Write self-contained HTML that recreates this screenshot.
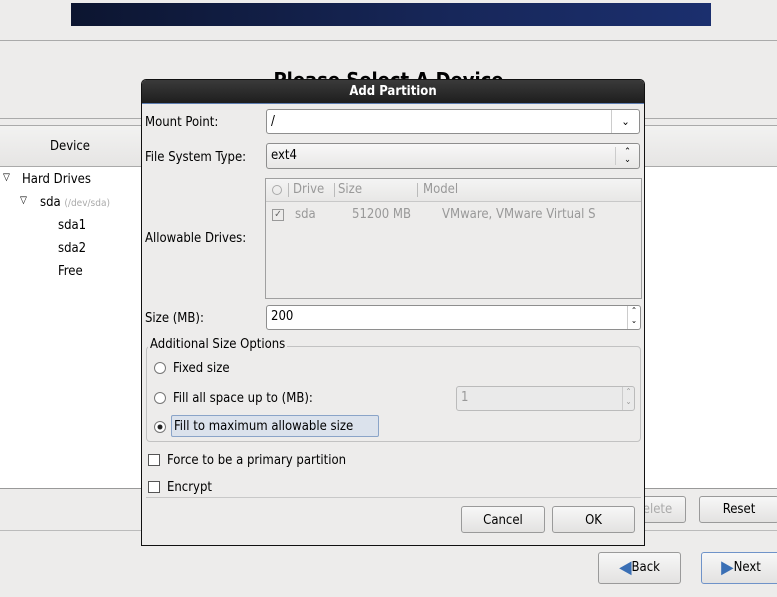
<!DOCTYPE html>
<html><head><style>
*{box-sizing:border-box;margin:0;padding:0}
body{width:777px;height:597px;background:#edeceb;font-family:"DejaVu Sans Condensed","DejaVu Sans","Liberation Sans",sans-serif;font-size:13px;color:#000;position:relative;overflow:hidden}
.a{position:absolute}
.btn{position:absolute;border:1px solid #9a9a9a;border-radius:3px;background:linear-gradient(#f7f7f7,#e3e2e1);text-align:center;line-height:26px}
.ent{position:absolute;background:#fff;border:1px solid #8e8e8e;border-radius:3px;padding-left:4px;line-height:22px}
.radio{position:absolute;width:12px;height:12px;border:1px solid #777;border-radius:50%;background:#fff}
.chk{position:absolute;width:12px;height:12px;border:1px solid #555;background:#fff}
</style></head><body>
<div class="a" style="left:71px;top:3px;width:640px;height:23px;background:linear-gradient(90deg,#0c1530,#17275a 60%,#1b2f6e)"></div>
<div class="a" style="left:0;top:40px;width:777px;height:1px;background:#aaa"></div>
<div class="a" style="left:0;top:68px;width:777px;text-align:center;font-size:20px;font-weight:bold;">Please Select A Device</div>
<div class="a" style="left:0;top:118px;width:777px;height:1px;background:#aaa"></div>
<div class="a" style="left:0;top:125px;width:777px;height:42px;background:linear-gradient(#f2f2f1,#e6e5e4);border-top:1px solid #aaa;border-bottom:1px solid #aaa"></div>
<div class="a" style="left:50px;top:139px">Device</div>
<div class="a" style="left:0;top:167px;width:777px;height:322px;background:#fff;border-bottom:1px solid #999"></div>
<div class="a" style="left:3px;top:172px;font-size:10px">▽</div><div class="a" style="left:22px;top:172px">Hard Drives</div>
<div class="a" style="left:20px;top:195px;font-size:10px">▽</div><div class="a" style="left:40px;top:195px">sda <span style="font-size:10px;color:#aaa">(/dev/sda)</span></div>
<div class="a" style="left:58px;top:218px">sda1</div>
<div class="a" style="left:58px;top:241px">sda2</div>
<div class="a" style="left:58px;top:264px">Free</div>
<div class="btn" style="left:620px;top:496px;width:66px;height:27px;color:#aaa">Delete</div>
<div class="btn" style="left:699px;top:496px;width:80px;height:27px">Reset</div>
<div class="a" style="left:0;top:530px;width:777px;height:1px;background:#bbb"></div>
<div class="btn" style="left:598px;top:552px;width:83px;height:32px;line-height:30px"><span style="color:#3a6fb5;font-size:18px;vertical-align:-2px">◀</span>Back</div>
<div class="btn" style="left:701px;top:552px;width:80px;height:32px;line-height:30px;border-color:#6f93c9"><span style="color:#3a6fb5;font-size:18px;vertical-align:-2px">▶</span>Next</div>

<div class="a" style="left:141px;top:79px;width:504px;height:467px;background:#edeceb;border:1px solid #111;border-radius:5px 5px 0 0;overflow:hidden">
<div class="a" style="left:0;top:0;width:502px;height:24px;background:linear-gradient(#3a3a3a,#1e1e1e);color:#fff;font-weight:bold;text-align:center;line-height:24px;border-bottom:1px solid #5d7db0">Add Partition</div>
<div class="a" style="left:3px;top:35px">Mount Point:</div>
<div class="ent" style="left:124px;top:29px;width:374px;height:25px;line-height:23px">/<div class="a" style="right:0;top:0;width:28px;height:23px;border-left:1px solid #ccc;text-align:center;font-size:11px">⌄</div></div>
<div class="a" style="left:3px;top:70px">File System Type:</div>
<div class="ent" style="left:124px;top:63px;width:374px;height:26px;line-height:24px;background:linear-gradient(#f8f8f8,#e8e7e6)">ext4<div class="a" style="right:0;top:3px;width:24px;height:18px;border-left:1px solid #ccc;text-align:center;font-size:9px;line-height:8px;padding-top:1px">⌃<br>⌄</div></div>
<div class="a" style="left:123px;top:98px;width:377px;height:121px;border:1px solid #a0a0a0;background:#edeceb">
 <div class="a" style="left:0;top:0;width:375px;height:23px;border-bottom:1px solid #c8c8c8;background:linear-gradient(#f4f4f4,#e8e7e6);color:#999;line-height:22px">
  <span class="a" style="left:6px;top:6px;width:10px;height:10px;border:1px solid #aaa;border-radius:50%"></span>
  <span class="a" style="left:22px;top:4px;width:1px;height:14px;background:#bbb"></span><span class="a" style="left:27px">Drive</span>
  <span class="a" style="left:68px;top:4px;width:1px;height:14px;background:#bbb"></span><span class="a" style="left:72px">Size</span>
  <span class="a" style="left:151px;top:4px;width:1px;height:14px;background:#bbb"></span><span class="a" style="left:157px">Model</span>
 </div>
 <div class="a" style="left:6px;top:30px;width:12px;height:12px;border:1px solid #999;font-size:10px;line-height:10px;text-align:center;color:#666">✓</div>
 <div class="a" style="left:29px;top:28px;color:#999">sda</div>
 <div class="a" style="left:86px;top:28px;color:#999">51200 MB</div>
 <div class="a" style="left:176px;top:28px;color:#999">VMware, VMware Virtual S</div>
</div>
<div class="a" style="left:3px;top:151px">Allowable Drives:</div>
<div class="a" style="left:3px;top:231px">Size (MB):</div>
<div class="ent" style="left:124px;top:225px;width:375px;height:25px">200<div class="a" style="right:0;top:0;width:13px;height:23px;border-left:1px solid #ccc;font-size:8px;line-height:10px;text-align:center">⌃<br>⌄</div></div>
<div class="a" style="left:4px;top:266px;width:495px;height:96px;border:1px solid #c2c2c2;border-radius:4px"></div>
<div class="a" style="left:6px;top:257px;background:#edeceb;padding:0 2px">Additional Size Options</div>
<div class="radio" style="left:12px;top:282px"></div><div class="a" style="left:31px;top:281px">Fixed size</div>
<div class="radio" style="left:12px;top:312px"></div><div class="a" style="left:31px;top:311px">Fill all space up to (MB):</div>
<div class="ent" style="left:314px;top:306px;width:179px;height:25px;background:#eaeaea;border-color:#bbb;color:#999">1<div class="a" style="right:0;top:0;width:12px;height:23px;border-left:1px solid #ccc;font-size:8px;line-height:10px;text-align:center">⌃<br>⌄</div></div>
<div class="radio" style="left:12px;top:341px;background:radial-gradient(#222 30%,#fff 40%)"></div>
<div class="a" style="left:29px;top:335px;width:208px;height:22px;background:#dbe2ec;border:1px solid #8aa4c8;border-radius:2px;padding-left:2px;line-height:21px">Fill to maximum allowable size</div>
<div class="chk" style="left:6px;top:374px"></div><div class="a" style="left:25px;top:373px">Force to be a primary partition</div>
<div class="chk" style="left:6px;top:401px"></div><div class="a" style="left:25px;top:400px">Encrypt</div>
<div class="a" style="left:4px;top:417px;width:495px;height:1px;background:#c8c8c8"></div>
<div class="btn" style="left:319px;top:426px;width:84px;height:27px;line-height:27px">Cancel</div>
<div class="btn" style="left:410px;top:426px;width:83px;height:27px;line-height:27px">OK</div>
</div>
</body></html>
